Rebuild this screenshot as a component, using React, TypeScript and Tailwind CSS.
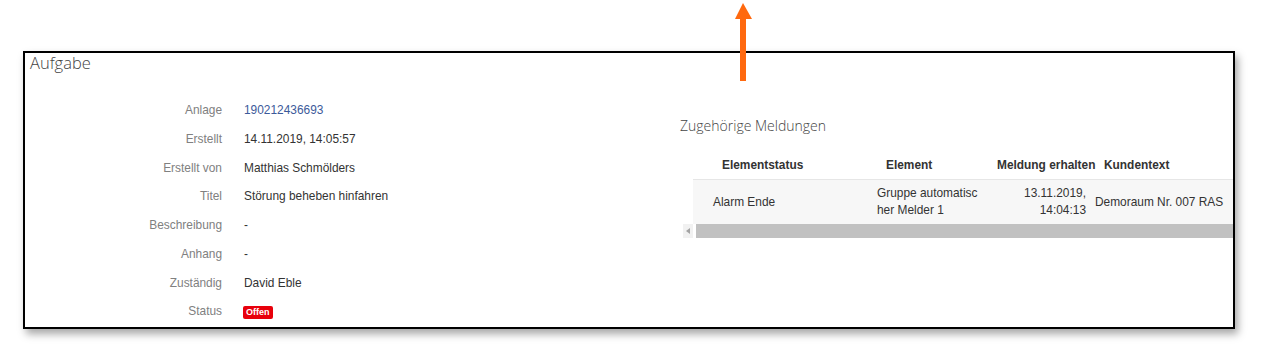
import React from "react";

const rows: { label: string; value: React.ReactNode }[] = [
  { label: "Anlage", value: <span className="text-[#3c5a9a]">190212436693</span> },
  { label: "Erstellt", value: "14.11.2019, 14:05:57" },
  { label: "Erstellt von", value: "Matthias Schmölders" },
  { label: "Titel", value: "Störung beheben hinfahren" },
  { label: "Beschreibung", value: "-" },
  { label: "Anhang", value: "-" },
  { label: "Zuständig", value: "David Eble" },
  {
    label: "Status",
    value: (
      <span className="-ml-px inline-flex h-[13px] items-center rounded-[2px] bg-[#e8000b] px-[3px] text-[9px] font-bold leading-[13px] text-white">
        Offen
      </span>
    ),
  },
];

export default function App() {
  return (
    <div className="relative h-[360px] w-[1266px] overflow-hidden bg-white pl-[23px] pt-[51px] font-['Liberation_Sans',Arial,sans-serif] text-[11.9px]">
      <div className="h-[278px] w-[1212px] overflow-hidden border-2 border-black bg-white shadow-[3px_5px_8px_rgba(0,0,0,0.35)]">
        <div className="h-[20px] pl-[5px] font-['Open_Sans',sans-serif] text-[16.5px] font-light leading-[20px] text-[#444]">
          Aufgabe
        </div>
        <div className="flex">
          <div className="w-[655px] shrink-0 pt-[24px]">
            {rows.map((r) => (
              <div key={r.label} className="flex h-[28.7px] items-center">
                <div className="w-[197px] text-right text-[#808080]">{r.label}</div>
                <div className="ml-[22px] text-[#333]">{r.value}</div>
              </div>
            ))}
          </div>
          <div className="min-w-0 flex-1 pt-[43px]">
            <div className="h-[20px] whitespace-nowrap font-['Open_Sans',sans-serif] text-[14px] font-light leading-[20px] text-[#444]">
              Zugehörige Meldungen
            </div>
            <div className="ml-[13px] mt-[16px] w-[560px]">
              <div className="flex h-[28px] items-center border-b border-[#e6e6e6] font-bold text-[#333]">
                <div className="w-[176px] shrink-0 pl-[29px]">Elementstatus</div>
                <div className="w-[120px] shrink-0 pl-[17px]">Element</div>
                <div className="w-[102px] shrink-0 whitespace-nowrap pl-[8px]">Meldung erhalten</div>
                <div className="flex-1 whitespace-nowrap pl-[13px]">Kundentext</div>
              </div>
              <div className="flex h-[44px] items-center bg-[#f7f7f7] leading-[17px] text-[#333]">
                <div className="w-[176px] shrink-0 pl-[20px]">Alarm Ende</div>
                <div className="w-[120px] shrink-0 pl-[8px]">
                  Gruppe automatisc
                  <br />
                  her Melder 1
                </div>
                <div className="w-[102px] shrink-0 pr-[5px] text-right">
                  13.11.2019,
                  <br />
                  14:04:13
                </div>
                <div className="flex-1 whitespace-nowrap pl-[4px]">Demoraum Nr. 007 RAS</div>
              </div>
            </div>
            <div className="ml-[3px] flex h-[14px]">
              <div className="flex w-[10px] items-center justify-center bg-[#f1f1f1]">
                <svg width="4" height="6" viewBox="0 0 4 6">
                  <polygon points="4,0 4,6 0,3" fill="#a3a3a3" />
                </svg>
              </div>
              <div className="w-[3px]" />
              <div className="flex-1 bg-[#c1c1c1]" />
            </div>
          </div>
        </div>
      </div>
      <svg
        className="absolute left-[733px] top-0 z-10"
        width="20"
        height="84"
        viewBox="0 0 20 84"
      >
        <polygon points="10,3 2,19 19,19" fill="#ff690f" />
        <rect x="7" y="18" width="6" height="63" fill="#ff690f" />
      </svg>
    </div>
  );
}
